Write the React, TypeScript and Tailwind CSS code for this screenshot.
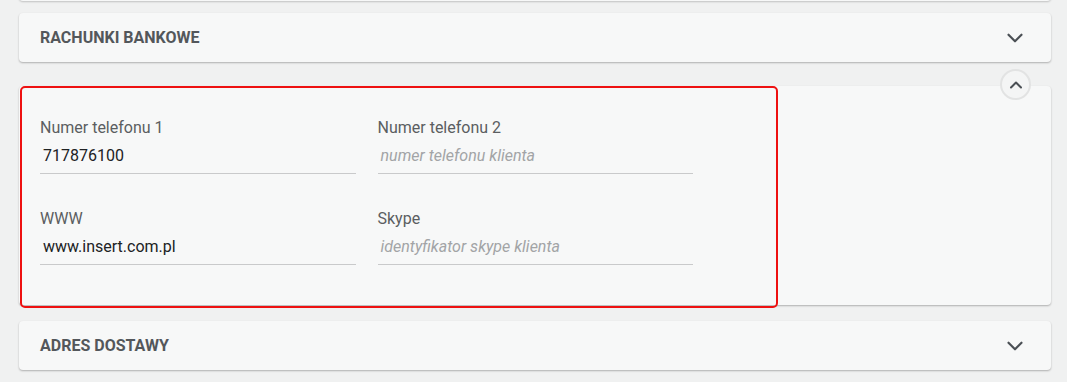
import { ChevronDown, ChevronUp } from "lucide-react";

function SectionHeader({ title }: { title: string }) {
  return (
    <div className="flex h-[49px] items-center justify-between rounded-[4px] bg-[#f7f8f8] pl-[21px] pr-[23px] shadow-[0_1px_2px_rgba(0,0,0,0.28)]">
      <span className="text-[16px] font-bold uppercase text-[#53575b]">{title}</span>
      <ChevronDown className="h-[26px] w-[26px] text-[#4b5055]" strokeWidth={2} />
    </div>
  );
}

function Field({ label, value, placeholder }: { label: string; value?: string; placeholder: string }) {
  return (
    <div className="flex flex-col">
      <label className="h-[20px] text-[16px] leading-[20px] text-[#5b5e61]">{label}</label>
      <div className="mt-[7px] border-b border-[#c9cacb] pb-[7px] pl-[3px]">
        {value ? (
          <span className="block text-[16px] leading-[21px] text-[#202224]">{value}</span>
        ) : (
          <span className="block text-[16px] italic leading-[21px] text-[#a2a4a6]">{placeholder}</span>
        )}
      </div>
    </div>
  );
}

export default function App() {
  return (
    <div className="relative min-h-[382px] w-[1067px] bg-[#f0f1f1] pl-[19px] pr-[16px] pt-[13px] font-['Roboto',sans-serif]">
      <div className="absolute left-[19px] right-[16px] top-[-10px] h-[11px] rounded-b-[4px] bg-[#f7f8f8] shadow-[0_1px_2px_rgba(0,0,0,0.2)]" />
      <SectionHeader title="Rachunki bankowe" />

      <div className="relative mt-[24px] h-[219px] rounded-[4px] bg-[#f7f8f8] px-[21px] pt-[32px] shadow-[0_1px_2px_rgba(0,0,0,0.28)]">
        <button className="absolute right-[20px] top-[-17px] flex h-[31px] w-[31px] items-center justify-center rounded-full border-2 border-[#e2e3e3] bg-[#f4f5f5] text-[#4b5055]">
          <ChevronUp className="h-[20px] w-[20px]" strokeWidth={2.4} />
        </button>
        <div className="grid w-[653px] grid-cols-2 gap-x-[22px] gap-y-[35px]">
          <Field label="Numer telefonu 1" value="717876100" placeholder="numer telefonu klienta" />
          <Field label="Numer telefonu 2" placeholder="numer telefonu klienta" />
          <Field label="WWW" value="www.insert.com.pl" placeholder="adres strony www" />
          <Field label="Skype" placeholder="identyfikator skype klienta" />
        </div>
        <div className="pointer-events-none absolute left-[1px] top-0 h-[222px] w-[758px] rounded-[5px] border-2 border-[#ee1111]" />
      </div>

      <div className="mt-[16px]">
        <SectionHeader title="Adres dostawy" />
      </div>
    </div>
  );
}
